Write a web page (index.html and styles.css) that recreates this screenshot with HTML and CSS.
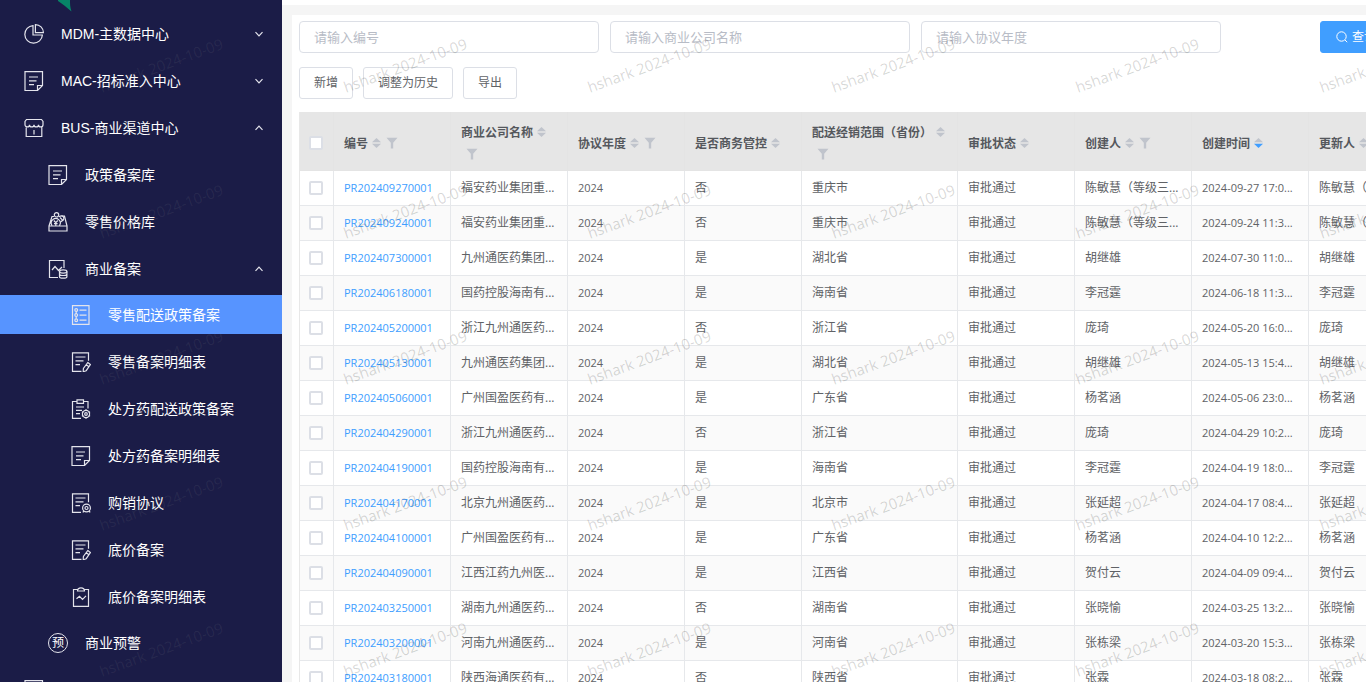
FILE: index.html
```html
<!DOCTYPE html>
<html lang="zh-CN">
<head>
<meta charset="utf-8">
<title>零售配送政策备案</title>
<link rel="stylesheet" href="styles.css">
</head>
<body>
<svg class="defs" aria-hidden="true">
  <symbol id="i-pie" viewBox="0 0 20 20"><path d="M9 1.6A8.8 8.8 0 1 0 18.400 11H9z"/><path d="M11.400.6v8h8a8 8 0 0 0-8-8z"/></symbol>
  <symbol id="i-note" viewBox="0 0 20 20"><path d="M1 .6h17.500v13.900l-5 5H1zM18.500 14.500h-5v5M5 6h9M5 9.800h7.500M5 13.600h5"/></symbol>
  <symbol id="i-shop" viewBox="0 0 20 20"><path d="M2.500 1.500h15l1.500 2v3.200a2.200 2.200 0 0 1-4.500 0 2.200 2.200 0 0 1-4.500 0 2.200 2.200 0 0 1-4.500 0 2.200 2.200 0 0 1-4.500 0V3.500zM2.200 9.500v9h15.600v-9M10 12v4.500"/></symbol>
  <symbol id="i-price" viewBox="0 0 20 20"><path d="M1 14h18v5H1zM1 14L4 4.500h2.200M19 14L16.500 4h-3M4 13.500a4.500 4.500 0 1 1 7.500 0M5.800 8.500l2 2.200 2-2.200M7.800 10.700v3.300M6 11.700h3.600"/><circle cx="8.500" cy="2.800" r="2.200"/><path d="M10.800 4.800c4-2 6 0 4.700 3l-3 2.200M12 5.500l2.800 2.800"/></symbol>
  <symbol id="i-chartdb" viewBox="0 0 20 20"><path d="M10 18.500H1.500v-17H16V9M4 11l3-3.500 3.500 4L14 8"/><ellipse cx="15.200" cy="12.500" rx="3.700" ry="1.600"/><path d="M11.500 12.500v5.200c0 2 7.400 2 7.400 0v-5.200M11.500 15c0 2 7.400 2 7.400 0"/></symbol>
  <symbol id="i-list" viewBox="0 0 20 20"><path d="M1.500.6H18v18.800H1.500zM8.500 5.200h7M8.500 10.200h7M8.500 15.200h7M5.200 6.500v2.200M5.200 11.500v2.200"/><circle cx="5.200" cy="5" r="1.400"/><circle cx="5.200" cy="10.100" r="1.400"/><circle cx="5.200" cy="15.200" r="1.400"/></symbol>
  <symbol id="i-edit" viewBox="0 0 20 20"><path d="M10.500 19.400H1.500V.8H17.500v8M4.500 5h10M4.500 8.800h8M4.500 12.600h4.500M16.800 10.500l2.600 2-4.200 6.200-3 1 .2-3.200zM15.300 12.700l2.600 2"/></symbol>
  <symbol id="i-clipset" viewBox="0 0 20 20"><path d="M6 2.500H1.500v16.900h8.500M12.500 2.500H17v7M6 .8h6.500v3.500H6zM5 8h8M5 11.300h6M5 14.600h4"/><circle cx="15" cy="15" r="3.600"/><circle cx="15" cy="15" r="1.300"/><path d="M15 10.300v1.500M15 18.200v1.500M10.900 12.700l1.400.8M17.700 16.500l1.400.8M10.900 17.300l1.400-.8M17.700 13.500l1.400-.8"/></symbol>
  <symbol id="i-seal" viewBox="0 0 20 20"><path d="M10 19.400H1.500V.8H17.500v8.500M4.500 5h10M4.500 8.800h8M4.500 12.600h4.500"/><circle cx="15.500" cy="15" r="3.900"/><circle cx="15.500" cy="15" r="1.500"/><path d="M12.700 17.700l-.7 1.800M18.300 17.700l.7 1.800"/></symbol>
  <symbol id="i-clipchart" viewBox="0 0 20 20"><path d="M6.500 2.500h-4v16.900h15V2.500h-4M6.500 4c0-4.200 7-4.200 7 0zM5.500 11.800l3-2.500 3 3 3.500-3.500"/></symbol>
  <symbol id="i-down" viewBox="0 0 10 10"><path d="M1.500 3.200L5 6.800l3.500-3.600"/></symbol>
  <symbol id="i-up" viewBox="0 0 10 10"><path d="M1.500 6.800L5 3.200l3.500 3.600"/></symbol>
  <symbol id="i-search" viewBox="0 0 12 12"><circle cx="5.500" cy="5.500" r="4.700"/><path d="M9 9l2.200 2.200"/></symbol>
  <symbol id="i-sort" viewBox="0 0 9 12"><path class="asc" d="M4.500 1L9 5.200H0z"/><path class="desc" d="M4.500 11L0 6.800h9z"/></symbol>
  <symbol id="i-filter" viewBox="0 0 12 12"><path d="M.5.800h11L7.200 5.800v5.700H4.800V5.800z"/></symbol>
</svg>

<aside class="sidebar">
  <svg class="logo-tip" viewBox="0 0 14 12" aria-hidden="true"><path d="M0 0h12c0 4 0 7 1.500 11.500C9 8 5 4 0 1z"/></svg>
  <nav class="menu">
    <button class="item"><svg class="icon"><use href="#i-pie"/></svg><span>MDM-主数据中心</span><svg class="arrow"><use href="#i-down"/></svg></button>
    <button class="item"><svg class="icon"><use href="#i-note"/></svg><span>MAC-招标准入中心</span><svg class="arrow"><use href="#i-down"/></svg></button>
    <button class="item"><svg class="icon"><use href="#i-shop"/></svg><span>BUS-商业渠道中心</span><svg class="arrow"><use href="#i-up"/></svg></button>
    <div class="submenu level2">
      <a class="item" href="#"><svg class="icon"><use href="#i-note"/></svg><span>政策备案库</span></a>
      <a class="item" href="#"><svg class="icon"><use href="#i-price"/></svg><span>零售价格库</span></a>
      <button class="item"><svg class="icon"><use href="#i-chartdb"/></svg><span>商业备案</span><svg class="arrow"><use href="#i-up"/></svg></button>
      <div class="submenu level3">
        <a class="item active" href="#"><svg class="icon"><use href="#i-list"/></svg><span>零售配送政策备案</span></a>
        <a class="item" href="#"><svg class="icon"><use href="#i-edit"/></svg><span>零售备案明细表</span></a>
        <a class="item" href="#"><svg class="icon"><use href="#i-clipset"/></svg><span>处方药配送政策备案</span></a>
        <a class="item" href="#"><svg class="icon"><use href="#i-note"/></svg><span>处方药备案明细表</span></a>
        <a class="item" href="#"><svg class="icon"><use href="#i-seal"/></svg><span>购销协议</span></a>
        <a class="item" href="#"><svg class="icon"><use href="#i-edit"/></svg><span>底价备案</span></a>
        <a class="item" href="#"><svg class="icon"><use href="#i-clipchart"/></svg><span>底价备案明细表</span></a>
      </div>
      <a class="item" href="#"><span class="icon round">预</span><span>商业预警</span></a>
    </div>
    <button class="item" aria-label="更多"><svg class="icon"><use href="#i-note"/></svg></button>
  </nav>
</aside>

<main class="main">
  <section class="panel">
    <form class="search">
      <input type="text" aria-label="编号" placeholder="请输入编号">
      <input type="text" aria-label="商业公司名称" placeholder="请输入商业公司名称">
      <input type="text" aria-label="协议年度" placeholder="请输入协议年度">
      <button class="btn primary" type="button"><svg><use href="#i-search"/></svg>查询</button>
    </form>
    <div class="toolbar">
      <button class="btn">新增</button>
      <button class="btn">调整为历史</button>
      <button class="btn">导出</button>
    </div>
    <table class="grid">
      <colgroup><col class="c-check"><col class="c-std"><col class="c-std"><col class="c-std"><col class="c-std"><col class="c-wide"><col class="c-std"><col class="c-std"><col class="c-std"><col class="c-std"></colgroup>
      <thead>
        <tr>
          <th><input type="checkbox" aria-label="全选"></th>
          <th>编号<svg class="sort"><use href="#i-sort"/></svg><svg class="filter"><use href="#i-filter"/></svg></th>
          <th>商业公司名称<svg class="sort"><use href="#i-sort"/></svg> <svg class="filter"><use href="#i-filter"/></svg></th>
          <th>协议年度<svg class="sort"><use href="#i-sort"/></svg><svg class="filter"><use href="#i-filter"/></svg></th>
          <th>是否商务管控<svg class="sort"><use href="#i-sort"/></svg></th>
          <th>配送经销范围（省份）<svg class="sort"><use href="#i-sort"/></svg> <svg class="filter"><use href="#i-filter"/></svg></th>
          <th>审批状态<svg class="sort"><use href="#i-sort"/></svg></th>
          <th>创建人<svg class="sort"><use href="#i-sort"/></svg><svg class="filter"><use href="#i-filter"/></svg></th>
          <th>创建时间<svg class="sort sorted"><use href="#i-sort"/></svg></th>
          <th>更新人<svg class="sort"><use href="#i-sort"/></svg></th>
        </tr>
      </thead>
      <tbody>
        <tr><td><input type="checkbox" aria-label="选择"></td><td class="num"><a href="#">PR202409270001</a></td><td>福安药业集团重...</td><td class="num">2024</td><td>否</td><td>重庆市</td><td>审批通过</td><td>陈敏慧（等级三...</td><td class="num">2024-09-27 17:0...</td><td>陈敏慧（等级三...</td></tr>
        <tr><td><input type="checkbox" aria-label="选择"></td><td class="num"><a href="#">PR202409240001</a></td><td>福安药业集团重...</td><td class="num">2024</td><td>否</td><td>重庆市</td><td>审批通过</td><td>陈敏慧（等级三...</td><td class="num">2024-09-24 11:3...</td><td>陈敏慧（等级三...</td></tr>
        <tr><td><input type="checkbox" aria-label="选择"></td><td class="num"><a href="#">PR202407300001</a></td><td>九州通医药集团...</td><td class="num">2024</td><td>是</td><td>湖北省</td><td>审批通过</td><td>胡继雄</td><td class="num">2024-07-30 11:0...</td><td>胡继雄</td></tr>
        <tr><td><input type="checkbox" aria-label="选择"></td><td class="num"><a href="#">PR202406180001</a></td><td>国药控股海南有...</td><td class="num">2024</td><td>是</td><td>海南省</td><td>审批通过</td><td>李冠霆</td><td class="num">2024-06-18 11:3...</td><td>李冠霆</td></tr>
        <tr><td><input type="checkbox" aria-label="选择"></td><td class="num"><a href="#">PR202405200001</a></td><td>浙江九州通医药...</td><td class="num">2024</td><td>否</td><td>浙江省</td><td>审批通过</td><td>庞琦</td><td class="num">2024-05-20 16:0...</td><td>庞琦</td></tr>
        <tr><td><input type="checkbox" aria-label="选择"></td><td class="num"><a href="#">PR202405130001</a></td><td>九州通医药集团...</td><td class="num">2024</td><td>是</td><td>湖北省</td><td>审批通过</td><td>胡继雄</td><td class="num">2024-05-13 15:4...</td><td>胡继雄</td></tr>
        <tr><td><input type="checkbox" aria-label="选择"></td><td class="num"><a href="#">PR202405060001</a></td><td>广州国盈医药有...</td><td class="num">2024</td><td>是</td><td>广东省</td><td>审批通过</td><td>杨茗涵</td><td class="num">2024-05-06 23:0...</td><td>杨茗涵</td></tr>
        <tr><td><input type="checkbox" aria-label="选择"></td><td class="num"><a href="#">PR202404290001</a></td><td>浙江九州通医药...</td><td class="num">2024</td><td>否</td><td>浙江省</td><td>审批通过</td><td>庞琦</td><td class="num">2024-04-29 10:2...</td><td>庞琦</td></tr>
        <tr><td><input type="checkbox" aria-label="选择"></td><td class="num"><a href="#">PR202404190001</a></td><td>国药控股海南有...</td><td class="num">2024</td><td>是</td><td>海南省</td><td>审批通过</td><td>李冠霆</td><td class="num">2024-04-19 18:0...</td><td>李冠霆</td></tr>
        <tr><td><input type="checkbox" aria-label="选择"></td><td class="num"><a href="#">PR202404170001</a></td><td>北京九州通医药...</td><td class="num">2024</td><td>是</td><td>北京市</td><td>审批通过</td><td>张延超</td><td class="num">2024-04-17 08:4...</td><td>张延超</td></tr>
        <tr><td><input type="checkbox" aria-label="选择"></td><td class="num"><a href="#">PR202404100001</a></td><td>广州国盈医药有...</td><td class="num">2024</td><td>是</td><td>广东省</td><td>审批通过</td><td>杨茗涵</td><td class="num">2024-04-10 12:2...</td><td>杨茗涵</td></tr>
        <tr><td><input type="checkbox" aria-label="选择"></td><td class="num"><a href="#">PR202404090001</a></td><td>江西江药九州医...</td><td class="num">2024</td><td>是</td><td>江西省</td><td>审批通过</td><td>贺付云</td><td class="num">2024-04-09 09:4...</td><td>贺付云</td></tr>
        <tr><td><input type="checkbox" aria-label="选择"></td><td class="num"><a href="#">PR202403250001</a></td><td>湖南九州通医药...</td><td class="num">2024</td><td>否</td><td>湖南省</td><td>审批通过</td><td>张晓愉</td><td class="num">2024-03-25 13:2...</td><td>张晓愉</td></tr>
        <tr><td><input type="checkbox" aria-label="选择"></td><td class="num"><a href="#">PR202403200001</a></td><td>河南九州通医药...</td><td class="num">2024</td><td>是</td><td>河南省</td><td>审批通过</td><td>张栋梁</td><td class="num">2024-03-20 15:3...</td><td>张栋梁</td></tr>
        <tr><td><input type="checkbox" aria-label="选择"></td><td class="num"><a href="#">PR202403180001</a></td><td>陕西海通医药有...</td><td class="num">2024</td><td>否</td><td>陕西省</td><td>审批通过</td><td>张霖</td><td class="num">2024-03-18 08:2...</td><td>张霖</td></tr>
      </tbody>
    </table>
  </section>
</main>

<div class="watermark" aria-hidden="true">
  <span class="dim">hshark 2024-10-09</span><span>hshark 2024-10-09</span><span>hshark 2024-10-09</span><span>hshark 2024-10-09</span><span>hshark 2024-10-09</span><span>hshark 2024-10-09</span>
  <span class="dim">hshark 2024-10-09</span><span>hshark 2024-10-09</span><span>hshark 2024-10-09</span><span>hshark 2024-10-09</span><span>hshark 2024-10-09</span><span>hshark 2024-10-09</span>
  <span class="dim">hshark 2024-10-09</span><span>hshark 2024-10-09</span><span>hshark 2024-10-09</span><span>hshark 2024-10-09</span><span>hshark 2024-10-09</span><span>hshark 2024-10-09</span>
  <span class="dim">hshark 2024-10-09</span><span>hshark 2024-10-09</span><span>hshark 2024-10-09</span><span>hshark 2024-10-09</span><span>hshark 2024-10-09</span><span>hshark 2024-10-09</span>
  <span class="dim">hshark 2024-10-09</span><span>hshark 2024-10-09</span><span>hshark 2024-10-09</span><span>hshark 2024-10-09</span><span>hshark 2024-10-09</span><span>hshark 2024-10-09</span>
</div>
</body>
</html>
```

FILE: styles.css
```css
* { box-sizing: border-box; }

body {
  position: relative;
  display: flex;
  height: 100vh;
  margin: 0;
  overflow: hidden;
  background: #f5f5f5;
  color: #606266;
  font: 12px/20px "Open Sans", "Noto Sans CJK SC", sans-serif;
}

button, input { font: inherit; }
a { text-decoration: none; }
.defs { position: absolute; width: 0; height: 0; }

/* Sidebar */
.sidebar {
  position: relative;
  flex: 0 0 282px;
  overflow: hidden;
  background: #1b1c47;
}

.logo-tip {
  position: absolute;
  top: 0;
  left: 58px;
  width: 14px;
  height: 12px;
  fill: #078467;
}

.menu, .submenu {
  display: flex;
  flex-direction: column;
  gap: 8px;
}

.menu { padding-top: 14px; }
.level3 { margin: -1px 0; }

.item {
  display: flex;
  flex: none;
  align-items: center;
  gap: 17px;
  width: 100%;
  height: 39px;
  padding: 0 18px 0 24px;
  border: 0;
  background: none;
  color: #fff;
  font: 14px/20px "Liberation Sans", "Noto Sans CJK SC", sans-serif;
  text-align: left;
}

.level2 .item { padding-left: 48px; }
.level3 .item { padding-left: 71px; }
.item.active { background: #5794ff; }

.icon {
  flex: none;
  width: 20px;
  height: 20px;
  fill: none;
  stroke: #e4e4ec;
  stroke-width: 1.2;
}

.round {
  border: 1px solid #e4e4ec;
  border-radius: 50%;
  font-size: 12px;
  line-height: 18px;
  text-align: center;
}

.arrow {
  width: 10px;
  height: 10px;
  margin-left: auto;
  fill: none;
  stroke: #e4e4ec;
  stroke-width: 1.2;
}

/* Content */
.main {
  flex: 1;
  min-width: 0;
  overflow: hidden;
  padding: 10px 0 0 10px;
  border-top: 5px solid #fff;
}

.panel {
  min-height: 100%;
  padding: 6px 0 0 7px;
  background: #fff;
}

.search { display: flex; gap: 11px; }

.search input {
  flex: 0 0 300px;
  height: 32px;
  padding: 0 14px;
  border: 1px solid #dcdfe6;
  border-radius: 4px;
  background: #fff;
  font-size: 13px;
}

.search input::placeholder { color: #b8bcc6; }

.btn {
  flex: none;
  height: 32px;
  padding: 0 14px;
  border: 1px solid #dcdfe6;
  border-radius: 3px;
  background: #fff;
  color: #606266;
}

.primary {
  display: flex;
  align-items: center;
  gap: 4px;
  margin-left: 88px;
  padding: 0 15px;
  border-color: #409eff;
  background: #409eff;
  color: #fff;
}

.primary svg {
  width: 12px;
  height: 12px;
  fill: none;
  stroke: #fff;
}

.toolbar {
  display: flex;
  gap: 10px;
  margin: 14px 0 13px;
}

/* Table */
.grid {
  width: 1127px;
  table-layout: fixed;
  border-collapse: separate;
  border-spacing: 0;
  border-left: 1px solid #e8e8e8;
}

.c-check { width: 34px; }
.c-std { width: 117px; }
.c-wide { width: 156px; }

.grid th, .grid td {
  padding: 0 10px;
  border-right: 1px solid #e6e8eb;
  border-bottom: 1px solid #e6e8eb;
  text-align: left;
  white-space: nowrap;
}

.grid th:first-child, .grid td:first-child { padding: 0 9px; }

.grid th {
  height: 59px;
  border-color: #e4e4e4;
  background: #e6e6e6;
  color: #55585d;
  font-weight: 700;
  line-height: 22px;
  white-space: normal;
}

.grid th:not(:first-child) { padding: 5px 5px 0 10px; }
.grid th:first-child { padding-top: 4px; }

.grid td { height: 35px; overflow: hidden; }
.grid tbody tr:nth-child(even) { background: #fafafa; }
.num { font-size: 11px; }
.num a { color: #409eff; }

.grid input {
  display: block;
  width: 14px;
  height: 14px;
  margin: 0;
  border: 2px solid #dcdfe6;
  border-radius: 2px;
  background: #fff;
  appearance: none;
}

.sort {
  --desc: #c0c4cc;
  width: 9px;
  height: 12px;
  margin-left: 4px;
  vertical-align: -1px;
}

.sorted { --desc: #409eff; }
.asc { fill: #c0c4cc; }
.desc { fill: var(--desc); }

.filter {
  width: 12px;
  height: 12px;
  margin-left: 5px;
  fill: #c0c4cc;
  vertical-align: -1px;
}

/* Watermark */
.watermark {
  position: absolute;
  inset: -8px 0 0 39px;
  display: grid;
  grid-template-columns: repeat(6, 244px);
  grid-auto-rows: 146px;
  align-content: start;
  place-items: center;
  overflow: hidden;
  color: rgba(0, 0, 0, 0.17);
  font-size: 15px;
  pointer-events: none;
}

.watermark span { transform: rotate(-20deg); }
.watermark .dim { color: rgba(160, 160, 160, 0.1); }
```
